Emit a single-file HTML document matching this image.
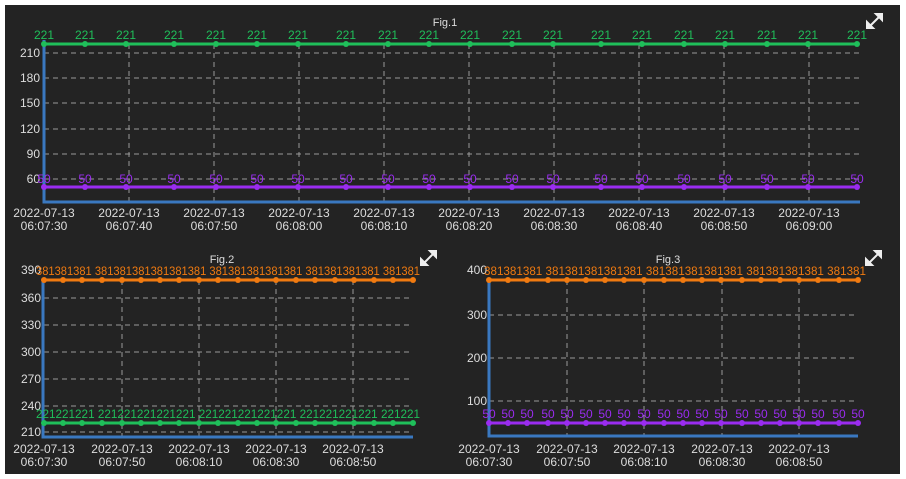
<!DOCTYPE html>
<html><head><style>
html,body{margin:0;padding:0;background:#fff;width:906px;height:479px;overflow:hidden}
svg{display:block}
text{font-family:"Liberation Sans",sans-serif;font-size:12px}
.ax{fill:#ddd;text-anchor:end}
.xl{fill:#ddd;text-anchor:middle}
.g{fill:#1fbf5a;text-anchor:middle;font-size:12px}
.p{fill:#9a2cf0;text-anchor:middle;font-size:11px}
.o{fill:#f07a10;text-anchor:middle;font-size:12px}
.grid{stroke:#999;stroke-width:1;stroke-dasharray:5,4}
</style></head><body>
<svg width="906" height="479" viewBox="0 0 906 479">
<rect x="5" y="5" width="895" height="469" fill="#232323"/>
<!-- Fig1 -->
<text x="445" y="26" class="xl" fill="#ccc" style="font-size:11px">Fig.1</text>
<g class="grid">
<line x1="44" y1="53" x2="860" y2="53"/><line x1="44" y1="78" x2="860" y2="78"/><line x1="44" y1="103" x2="860" y2="103"/><line x1="44" y1="129" x2="860" y2="129"/><line x1="44" y1="154" x2="860" y2="154"/><line x1="44" y1="179" x2="860" y2="179"/>
<line x1="129" y1="44" x2="129" y2="202"/><line x1="214" y1="44" x2="214" y2="202"/><line x1="299" y1="44" x2="299" y2="202"/><line x1="384" y1="44" x2="384" y2="202"/><line x1="469" y1="44" x2="469" y2="202"/><line x1="554" y1="44" x2="554" y2="202"/><line x1="639" y1="44" x2="639" y2="202"/><line x1="724" y1="44" x2="724" y2="202"/><line x1="809" y1="44" x2="809" y2="202"/>
</g>
<g class="ax"><text x="40" y="57">210</text><text x="40" y="82">180</text><text x="40" y="107">150</text><text x="40" y="133">120</text><text x="40" y="158">90</text><text x="40" y="183">60</text></g>
<polyline points="44,40 44,202 860,202" fill="none" stroke="#3a78c0" stroke-width="3"/>
<line x1="44" y1="44" x2="857" y2="44" stroke="#1fbf5a" stroke-width="3"/>
<line x1="44" y1="187" x2="857" y2="187" stroke="#9a2cf0" stroke-width="3"/>
<g fill="#1fbf5a"><circle cx="44" cy="44" r="3"/><circle cx="85" cy="44" r="3"/><circle cx="126" cy="44" r="3"/><circle cx="174" cy="44" r="3"/><circle cx="216" cy="44" r="3"/><circle cx="257" cy="44" r="3"/><circle cx="298" cy="44" r="3"/><circle cx="346" cy="44" r="3"/><circle cx="388" cy="44" r="3"/><circle cx="429" cy="44" r="3"/><circle cx="470" cy="44" r="3"/><circle cx="512" cy="44" r="3"/><circle cx="553" cy="44" r="3"/><circle cx="601" cy="44" r="3"/><circle cx="642" cy="44" r="3"/><circle cx="684" cy="44" r="3"/><circle cx="725" cy="44" r="3"/><circle cx="767" cy="44" r="3"/><circle cx="808" cy="44" r="3"/><circle cx="857" cy="44" r="3"/></g>
<g fill="#9a2cf0"><circle cx="44" cy="187" r="3"/><circle cx="85" cy="187" r="3"/><circle cx="126" cy="187" r="3"/><circle cx="174" cy="187" r="3"/><circle cx="216" cy="187" r="3"/><circle cx="257" cy="187" r="3"/><circle cx="298" cy="187" r="3"/><circle cx="346" cy="187" r="3"/><circle cx="388" cy="187" r="3"/><circle cx="429" cy="187" r="3"/><circle cx="470" cy="187" r="3"/><circle cx="512" cy="187" r="3"/><circle cx="553" cy="187" r="3"/><circle cx="601" cy="187" r="3"/><circle cx="642" cy="187" r="3"/><circle cx="684" cy="187" r="3"/><circle cx="725" cy="187" r="3"/><circle cx="767" cy="187" r="3"/><circle cx="808" cy="187" r="3"/><circle cx="857" cy="187" r="3"/></g>
<g class="g"><text x="44" y="39">221</text><text x="85" y="39">221</text><text x="126" y="39">221</text><text x="174" y="39">221</text><text x="216" y="39">221</text><text x="257" y="39">221</text><text x="298" y="39">221</text><text x="346" y="39">221</text><text x="388" y="39">221</text><text x="429" y="39">221</text><text x="470" y="39">221</text><text x="512" y="39">221</text><text x="553" y="39">221</text><text x="601" y="39">221</text><text x="642" y="39">221</text><text x="684" y="39">221</text><text x="725" y="39">221</text><text x="767" y="39">221</text><text x="808" y="39">221</text><text x="857" y="39">221</text></g>
<g class="p"><text x="44" y="183">50</text><text x="85" y="183">50</text><text x="126" y="183">50</text><text x="174" y="183">50</text><text x="216" y="183">50</text><text x="257" y="183">50</text><text x="298" y="183">50</text><text x="346" y="183">50</text><text x="388" y="183">50</text><text x="429" y="183">50</text><text x="470" y="183">50</text><text x="512" y="183">50</text><text x="553" y="183">50</text><text x="601" y="183">50</text><text x="642" y="183">50</text><text x="684" y="183">50</text><text x="725" y="183">50</text><text x="767" y="183">50</text><text x="808" y="183">50</text><text x="857" y="183">50</text></g>
<g class="xl">
<text x="44" y="217">2022-07-13</text><text x="44" y="230">06:07:30</text>
<text x="129" y="217">2022-07-13</text><text x="129" y="230">06:07:40</text>
<text x="214" y="217">2022-07-13</text><text x="214" y="230">06:07:50</text>
<text x="299" y="217">2022-07-13</text><text x="299" y="230">06:08:00</text>
<text x="384" y="217">2022-07-13</text><text x="384" y="230">06:08:10</text>
<text x="469" y="217">2022-07-13</text><text x="469" y="230">06:08:20</text>
<text x="554" y="217">2022-07-13</text><text x="554" y="230">06:08:30</text>
<text x="639" y="217">2022-07-13</text><text x="639" y="230">06:08:40</text>
<text x="724" y="217">2022-07-13</text><text x="724" y="230">06:08:50</text>
<text x="809" y="217">2022-07-13</text><text x="809" y="230">06:09:00</text>
</g>
<g stroke="#eee" stroke-width="2" fill="#eee"><line x1="869" y1="27" x2="881" y2="15"/><path d="M876 14h6v6z"/><path d="M867 22v6h6z"/></g>

<!-- Fig2 -->
<text x="222" y="263" class="xl" fill="#ccc" style="font-size:11px">Fig.2</text>
<g class="grid">
<line x1="44" y1="298" x2="413" y2="298"/><line x1="44" y1="325" x2="413" y2="325"/><line x1="44" y1="352" x2="413" y2="352"/><line x1="44" y1="379" x2="413" y2="379"/><line x1="44" y1="406" x2="413" y2="406"/><line x1="44" y1="432" x2="413" y2="432"/>
<line x1="122" y1="280" x2="122" y2="437"/><line x1="199" y1="280" x2="199" y2="437"/><line x1="276" y1="280" x2="276" y2="437"/><line x1="353" y1="280" x2="353" y2="437"/>
</g>
<g class="ax"><text x="41" y="274">390</text><text x="41" y="302">360</text><text x="41" y="329">330</text><text x="41" y="356">300</text><text x="41" y="383">270</text><text x="41" y="410">240</text><text x="41" y="436">210</text></g>
<polyline points="43,280 43,437 413,437" fill="none" stroke="#3a78c0" stroke-width="3"/>
<line x1="44" y1="280" x2="413" y2="280" stroke="#f07a10" stroke-width="3"/>
<line x1="44" y1="423" x2="413" y2="423" stroke="#1fbf5a" stroke-width="3"/>
<g fill="#f07a10"><circle cx="44" cy="280" r="3"/><circle cx="63" cy="280" r="3"/><circle cx="82" cy="280" r="3"/><circle cx="102" cy="280" r="3"/><circle cx="122" cy="280" r="3"/><circle cx="141" cy="280" r="3"/><circle cx="160" cy="280" r="3"/><circle cx="179" cy="280" r="3"/><circle cx="199" cy="280" r="3"/><circle cx="218" cy="280" r="3"/><circle cx="238" cy="280" r="3"/><circle cx="257" cy="280" r="3"/><circle cx="276" cy="280" r="3"/><circle cx="296" cy="280" r="3"/><circle cx="315" cy="280" r="3"/><circle cx="335" cy="280" r="3"/><circle cx="354" cy="280" r="3"/><circle cx="374" cy="280" r="3"/><circle cx="393" cy="280" r="3"/><circle cx="413" cy="280" r="3"/></g>
<g fill="#1fbf5a"><circle cx="44" cy="423" r="3"/><circle cx="63" cy="423" r="3"/><circle cx="82" cy="423" r="3"/><circle cx="102" cy="423" r="3"/><circle cx="122" cy="423" r="3"/><circle cx="141" cy="423" r="3"/><circle cx="160" cy="423" r="3"/><circle cx="179" cy="423" r="3"/><circle cx="199" cy="423" r="3"/><circle cx="218" cy="423" r="3"/><circle cx="238" cy="423" r="3"/><circle cx="257" cy="423" r="3"/><circle cx="276" cy="423" r="3"/><circle cx="296" cy="423" r="3"/><circle cx="315" cy="423" r="3"/><circle cx="335" cy="423" r="3"/><circle cx="354" cy="423" r="3"/><circle cx="374" cy="423" r="3"/><circle cx="393" cy="423" r="3"/><circle cx="413" cy="423" r="3"/></g>
<text x="36" y="275" class="o" textLength="384" lengthAdjust="spacingAndGlyphs" style="text-anchor:start">381381381 381381381381381381 381381381381381 381381381381 381381</text>
<text x="36" y="418" class="g" textLength="384" lengthAdjust="spacingAndGlyphs" style="text-anchor:start">221221221 221221221221221 221221221221221 221221221221 221221</text>
<g class="xl">
<text x="44" y="453">2022-07-13</text><text x="44" y="466">06:07:30</text>
<text x="122" y="453">2022-07-13</text><text x="122" y="466">06:07:50</text>
<text x="199" y="453">2022-07-13</text><text x="199" y="466">06:08:10</text>
<text x="276" y="453">2022-07-13</text><text x="276" y="466">06:08:30</text>
<text x="353" y="453">2022-07-13</text><text x="353" y="466">06:08:50</text>
</g>
<g stroke="#eee" stroke-width="2" fill="#eee"><line x1="423" y1="264" x2="435" y2="252"/><path d="M430 251h6v6z"/><path d="M421 259v6h6z"/></g>

<!-- Fig3 -->
<text x="668" y="263" class="xl" fill="#ccc" style="font-size:11px">Fig.3</text>
<g class="grid">
<line x1="489" y1="315" x2="858" y2="315"/><line x1="489" y1="358" x2="858" y2="358"/><line x1="489" y1="401" x2="858" y2="401"/>
<line x1="567" y1="280" x2="567" y2="436"/><line x1="644" y1="280" x2="644" y2="436"/><line x1="722" y1="280" x2="722" y2="436"/><line x1="799" y1="280" x2="799" y2="436"/>
</g>
<g class="ax"><text x="487" y="274">400</text><text x="487" y="319">300</text><text x="487" y="362">200</text><text x="487" y="405">100</text></g>
<polyline points="489,280 489,436 858,436" fill="none" stroke="#3a78c0" stroke-width="3"/>
<line x1="489" y1="280" x2="858" y2="280" stroke="#f07a10" stroke-width="3"/>
<line x1="489" y1="423" x2="858" y2="423" stroke="#9a2cf0" stroke-width="3"/>
<g fill="#f07a10"><circle cx="489" cy="280" r="3"/><circle cx="508" cy="280" r="3"/><circle cx="527" cy="280" r="3"/><circle cx="548" cy="280" r="3"/><circle cx="567" cy="280" r="3"/><circle cx="586" cy="280" r="3"/><circle cx="605" cy="280" r="3"/><circle cx="624" cy="280" r="3"/><circle cx="644" cy="280" r="3"/><circle cx="664" cy="280" r="3"/><circle cx="683" cy="280" r="3"/><circle cx="702" cy="280" r="3"/><circle cx="721" cy="280" r="3"/><circle cx="742" cy="280" r="3"/><circle cx="761" cy="280" r="3"/><circle cx="780" cy="280" r="3"/><circle cx="799" cy="280" r="3"/><circle cx="818" cy="280" r="3"/><circle cx="839" cy="280" r="3"/><circle cx="858" cy="280" r="3"/></g>
<g fill="#9a2cf0"><circle cx="489" cy="423" r="3"/><circle cx="508" cy="423" r="3"/><circle cx="527" cy="423" r="3"/><circle cx="548" cy="423" r="3"/><circle cx="567" cy="423" r="3"/><circle cx="586" cy="423" r="3"/><circle cx="605" cy="423" r="3"/><circle cx="624" cy="423" r="3"/><circle cx="644" cy="423" r="3"/><circle cx="664" cy="423" r="3"/><circle cx="683" cy="423" r="3"/><circle cx="702" cy="423" r="3"/><circle cx="721" cy="423" r="3"/><circle cx="742" cy="423" r="3"/><circle cx="761" cy="423" r="3"/><circle cx="780" cy="423" r="3"/><circle cx="799" cy="423" r="3"/><circle cx="818" cy="423" r="3"/><circle cx="839" cy="423" r="3"/><circle cx="858" cy="423" r="3"/></g>
<text x="484" y="275" class="o" textLength="382" lengthAdjust="spacingAndGlyphs" style="text-anchor:start">381381381 381381381381381 381381381381381 381381381381 381381</text>
<g class="p"><text x="489" y="418">50</text><text x="508" y="418">50</text><text x="527" y="418">50</text><text x="548" y="418">50</text><text x="567" y="418">50</text><text x="586" y="418">50</text><text x="605" y="418">50</text><text x="624" y="418">50</text><text x="644" y="418">50</text><text x="664" y="418">50</text><text x="683" y="418">50</text><text x="702" y="418">50</text><text x="721" y="418">50</text><text x="742" y="418">50</text><text x="761" y="418">50</text><text x="780" y="418">50</text><text x="799" y="418">50</text><text x="818" y="418">50</text><text x="839" y="418">50</text><text x="858" y="418">50</text></g>
<g class="xl">
<text x="489" y="453">2022-07-13</text><text x="489" y="466">06:07:30</text>
<text x="567" y="453">2022-07-13</text><text x="567" y="466">06:07:50</text>
<text x="644" y="453">2022-07-13</text><text x="644" y="466">06:08:10</text>
<text x="722" y="453">2022-07-13</text><text x="722" y="466">06:08:30</text>
<text x="799" y="453">2022-07-13</text><text x="799" y="466">06:08:50</text>
</g>
<g stroke="#eee" stroke-width="2" fill="#eee"><line x1="868" y1="264" x2="880" y2="252"/><path d="M875 251h6v6z"/><path d="M866 259v6h6z"/></g>
</svg>
</body></html>
